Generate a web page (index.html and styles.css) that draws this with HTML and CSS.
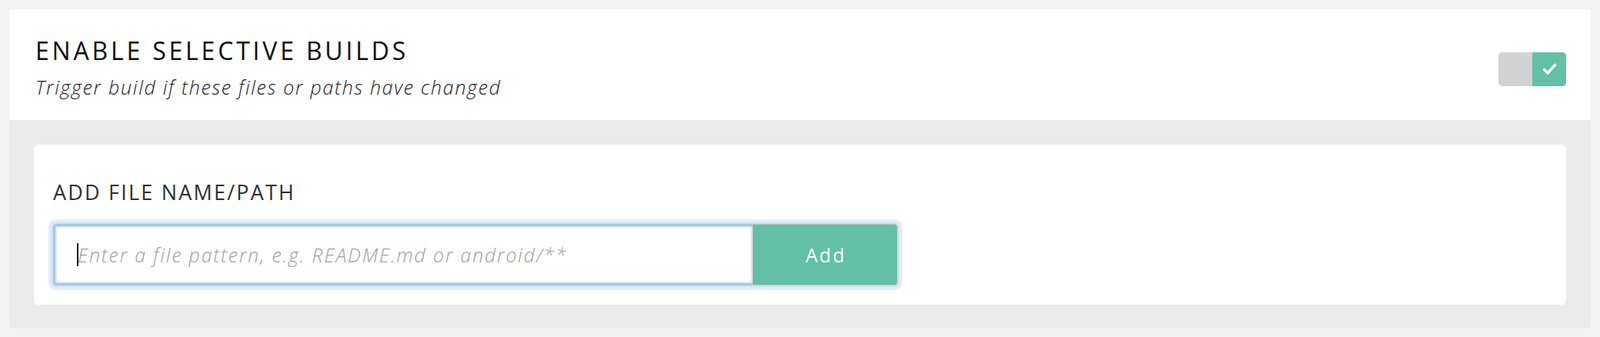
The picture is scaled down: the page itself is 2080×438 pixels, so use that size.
FILE: index.html
```html
<!DOCTYPE html>
<html lang="en">
<head>
<meta charset="utf-8">
<title>Selective builds</title>
<link rel="stylesheet" href="styles.css">
</head>
<body>
<section class="panel">
  <header class="panel-head">
    <div class="head-text">
      <h1 class="title">ENABLE SELECTIVE BUILDS</h1>
      <p class="subtitle">Trigger build if these files or paths have changed</p>
    </div>
    <div class="toggle" role="switch" aria-checked="true">
      <span class="toggle-off"></span>
      <span class="toggle-on">
        <svg width="44" height="44" viewBox="0 0 44 44" aria-hidden="true"><path d="M15.5 22.5 L20 27 L29.5 16.5" fill="none" stroke="#fff" stroke-width="3.6" stroke-linecap="round" stroke-linejoin="round"/></svg>
      </span>
    </div>
  </header>
  <div class="panel-body">
    <div class="card">
      <label class="label" for="pattern">ADD FILE NAME/PATH</label>
      <div class="group">
        <div class="field">
          <input id="pattern" class="input" type="text" placeholder="Enter a file pattern, e.g. README.md or android/**">
        </div>
        <button class="btn" type="button">Add</button>
      </div>
    </div>
  </div>
</section>
</body>
</html>
```

FILE: styles.css
```css
* { box-sizing: border-box; }
html, body { margin: 0; }
body {
  width: 2080px;
  height: 438px;
  padding: 12px 12px 11px;
  background: #f3f3f3;
  font-family: "Open Sans", Lato, sans-serif;
}
.panel {
  background: #ebebeb;
  border-radius: 5px;
  overflow: hidden;
}
.panel-head {
  background: #fff;
  height: 144px;
  display: flex;
  justify-content: space-between;
  align-items: flex-start;
  padding: 36px 32px 0 34px;
}
.title {
  margin: 0;
  font-size: 32px;
  line-height: 36px;
  font-weight: 500;
  color: #0d0d0d;
  letter-spacing: 3.8px;
}
.subtitle {
  margin: 14px 0 0;
  font-size: 25px;
  line-height: 30px;
  font-weight: 300;
  font-style: italic;
  color: #1a1a1a;
  letter-spacing: 1.7px;
}
.toggle {
  margin-top: 20px;
  width: 88px;
  height: 44px;
  display: flex;
  border-radius: 5px;
  overflow: hidden;
}
.toggle-off { flex: 1; background: #d1d2d4; }
.toggle-on { flex: 1; background: #63c0a6; display: flex; }
.panel-body { padding: 32px 32px 31px; }
.card {
  background: #fff;
  border-radius: 6px;
  padding: 46px 25px 25px;
}
.label {
  display: block;
  font-size: 27px;
  line-height: 32px;
  color: #303030;
  font-weight: 400;
  letter-spacing: 2.2px;
}
.group {
  margin-top: 25px;
  width: 1098px;
  height: 80px;
  display: flex;
  border-radius: 4px;
  box-shadow: 0 0 0 2px #cfe1f3, 0 0 0 6px #e2edf9;
}
.field {
  position: relative;
  flex: 1;
  display: flex;
}
.field::before {
  content: "";
  position: absolute;
  left: 31px;
  top: 25px;
  width: 2px;
  height: 30px;
  background: #1a1a1a;
}
.input {
  flex: 1;
  width: 100%;
  margin: 0;
  border: 3px solid #a9c7e3;
  border-right: 0;
  border-radius: 4px 0 0 4px;
  box-shadow: inset 0 0 0 2px #d9e8f7;
  padding: 0 0 0 29px;
  font-family: "Open Sans", Lato, sans-serif;
  font-size: 25px;
  font-style: italic;
  font-weight: 300;
  letter-spacing: 1.8px;
  color: #333;
  background: #fff;
  outline: none;
}
.input::placeholder { color: #a0a0a0; opacity: 1; }
.btn {
  width: 189px;
  margin: 0;
  border: 1.5px solid #c4c4c4;
  border-radius: 0 4px 4px 0;
  background: #63c0a6;
  color: #fff;
  font-family: "Open Sans", Lato, sans-serif;
  font-size: 25px;
  font-weight: 400;
  letter-spacing: 2px;
  padding: 0 0 0 2px;
}
```
